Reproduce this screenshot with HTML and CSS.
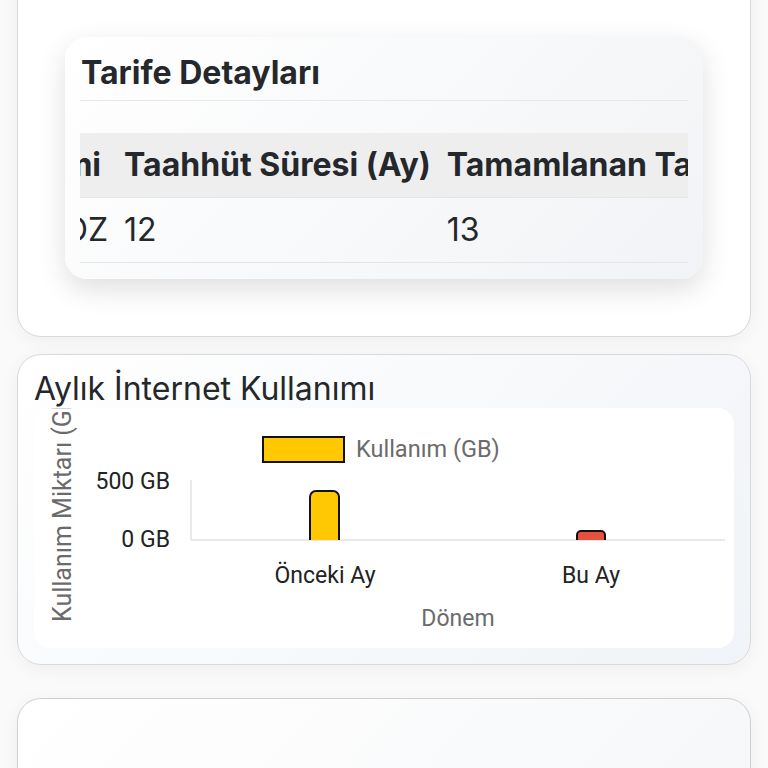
FILE: index.html
```html
<!DOCTYPE html>
<html lang="tr">
<head>
  <meta charset="UTF-8">
  <meta name="viewport" content="width=device-width, initial-scale=1">
  <title>Hesabım</title>
  <link rel="stylesheet" href="styles.css">
</head>
<body>
  <div class="page">

    <div class="card card-tariff">
      <div class="tariff-box">
        <h2 class="tariff-title">Tarife Detayları</h2>
        <div class="table-wrap" id="tableWrap">
          <table class="tariff-table">
            <thead>
              <tr>
                <th id="firstCol">Tarife İsmi</th>
                <th>Taahhüt Süresi (Ay)</th>
                <th>Tamamlanan Taahhüt (Ay)</th>
                <th>Kalan Taahhüt (Ay)</th>
              </tr>
            </thead>
            <tbody>
              <tr>
                <td>MEGA DOZ</td>
                <td>12</td>
                <td>13</td>
                <td>0</td>
              </tr>
            </tbody>
          </table>
        </div>
      </div>
    </div>

    <div class="card card-usage">
      <h2 class="usage-title">Aylık İnternet Kullanımı</h2>
      <div class="chart-box">
        <svg class="chart" viewBox="0 0 700 240" width="700" height="240">
          <text class="axis-title axis-y" transform="translate(37 214) rotate(-90)">Kullanım Miktarı (GB)</text>

          <rect x="229" y="29" width="81" height="25" fill="#ffc800" stroke="#111" stroke-width="2"/>
          <text class="legend" x="322" y="49">Kullanım (GB)</text>

          <text class="tick" x="136" y="81" text-anchor="end">500 GB</text>
          <text class="tick" x="136" y="139" text-anchor="end">0 GB</text>

          <line x1="157" y1="72" x2="157" y2="132" stroke="#e2e2e2" stroke-width="1.5"/>
          <line x1="157" y1="132" x2="691" y2="132" stroke="#e2e2e2" stroke-width="1.5"/>

          <path d="M276 132 V89 a6 6 0 0 1 6 -6 H299 a6 6 0 0 1 6 6 V132" fill="#ffc800" stroke="#111" stroke-width="2"/>
          <path d="M543 132 V127 a4 4 0 0 1 4 -4 H567 a4 4 0 0 1 4 4 V132" fill="#e8503e" stroke="#111" stroke-width="2"/>

          <text class="tick" x="291" y="175" text-anchor="middle">Önceki Ay</text>
          <text class="tick" x="557" y="175" text-anchor="middle">Bu Ay</text>
          <text class="axis-title" x="424" y="218" text-anchor="middle">Dönem</text>
        </svg>
      </div>
    </div>

    <div class="card card-next"></div>

  </div>

  <script>
    const tableWrap = document.getElementById('tableWrap');
    const firstCol = document.getElementById('firstCol');
    tableWrap.scrollLeft = firstCol.offsetWidth - 36;
  </script>
</body>
</html>
```

FILE: styles.css
```css
body {
  margin: 0;
  background-color: #fafafa;
  font-family: Inter, "Noto Sans", sans-serif;
  color: #24272b;
}
.page {
  padding: 0 17px;
  margin-top: -40px;
}
.card {
  border: 1px solid #d9d9d9;
  border-radius: 24px;
  background-color: #fff;
  box-shadow: 0 4px 18px rgba(0,0,0,0.05);
}
.card-tariff {
  padding: 76px 47px 57px;
  margin-bottom: 17px;
}
.tariff-box {
  padding: 16px 15px;
  border-radius: 22px;
  background: linear-gradient(135deg, #ffffff 0%, #f1f3f6 100%);
  box-shadow: 0 10px 28px rgba(0,0,0,0.13);
}
.tariff-title {
  margin: 0;
  padding: 0 1px 8px;
  font-size: 32px;
  line-height: 39px;
  font-weight: 700;
  border-bottom: 1px solid #e6e8eb;
}
.table-wrap {
  margin-top: 32px;
  overflow-x: auto;
  scrollbar-width: none;
}
.table-wrap::-webkit-scrollbar {
  display: none;
}
.tariff-table {
  border-collapse: collapse;
  white-space: nowrap;
}
.tariff-table th,
.tariff-table td {
  padding: 15px 8px;
  font-size: 32px;
  line-height: 34px;
  text-align: left;
  border-bottom: 1px solid #e3e5e8;
}
.tariff-table th {
  background-color: #eeeeee;
  font-weight: 700;
}
.tariff-table td {
  font-weight: 400;
}
.card-usage {
  padding: 15px 16px 16px;
  margin-bottom: 33px;
  background: linear-gradient(135deg, #ffffff 0%, #f0f3f7 100%);
}
.usage-title {
  margin: 0;
  font-size: 32px;
  line-height: 38px;
  font-weight: 400;
}
.chart-box {
  height: 240px;
  border-radius: 16px;
  background-color: #fff;
  overflow: hidden;
}
.chart {
  display: block;
}
.chart text {
  font-family: Roboto, "Liberation Sans", sans-serif;
  font-size: 23px;
}
.chart .tick {
  fill: #222;
}
.chart .legend {
  font-size: 23.5px;
}
.chart .legend,
.chart .axis-title {
  fill: #6b6b6b;
}
.chart .axis-y {
  font-size: 25px;
}
.card-next {
  height: 120px;
  background: linear-gradient(135deg, #ffffff 0%, #f6f7f9 100%);
  border-color: #cfcfcf;
}
```
